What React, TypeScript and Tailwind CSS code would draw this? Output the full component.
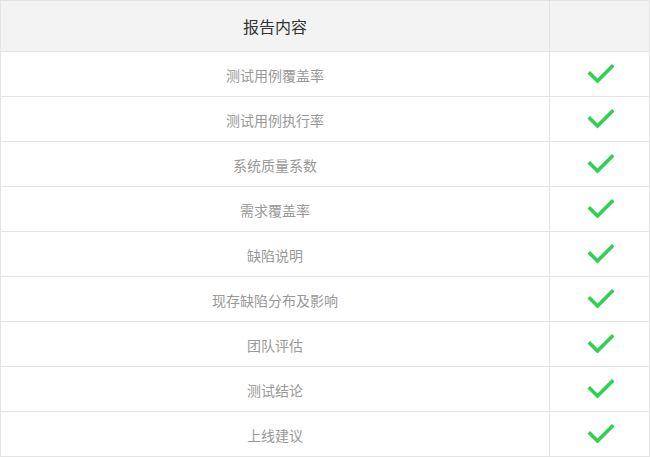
import React from 'react';

const items = [
  '测试用例覆盖率',
  '测试用例执行率',
  '系统质量系数',
  '需求覆盖率',
  '缺陷说明',
  '现存缺陷分布及影响',
  '团队评估',
  '测试结论',
  '上线建议',
];

const Check = () => (
  <svg width="28" height="22" viewBox="0 0 28 22" fill="none" className="mb-[3px]">
    <path d="M4 11.5L11.5 19L26 4.5" stroke="#2fd153" strokeWidth="3.6" strokeLinecap="square" />
  </svg>
);

export default function App() {
  return (
    <div
      className="w-[650px] bg-white"
      style={{ fontFamily: '"Noto Sans CJK SC", "Noto Sans", sans-serif' }}
    >
      <div className="grid grid-cols-[549px_100px] border-l border-t border-[#e4e4e4]">
        {/* Header */}
        <div className="h-[51px] bg-[#f3f3f3] border-r border-b border-[#e4e4e4] flex items-center justify-center text-[16px] text-[#333] pb-[1px]">
          报告内容
        </div>
        <div className="h-[51px] bg-[#f3f3f3] border-r border-b border-[#e4e4e4]" />

        {items.map((item) => (
          <React.Fragment key={item}>
            <div className="h-[45px] border-r border-b border-[#e4e4e4] flex items-center justify-center text-[14px] text-[#999] pt-[3px]">
              {item}
            </div>
            <div className="h-[45px] border-r border-b border-[#e4e4e4] flex items-center justify-center">
              <Check />
            </div>
          </React.Fragment>
        ))}
      </div>
    </div>
  );
}
